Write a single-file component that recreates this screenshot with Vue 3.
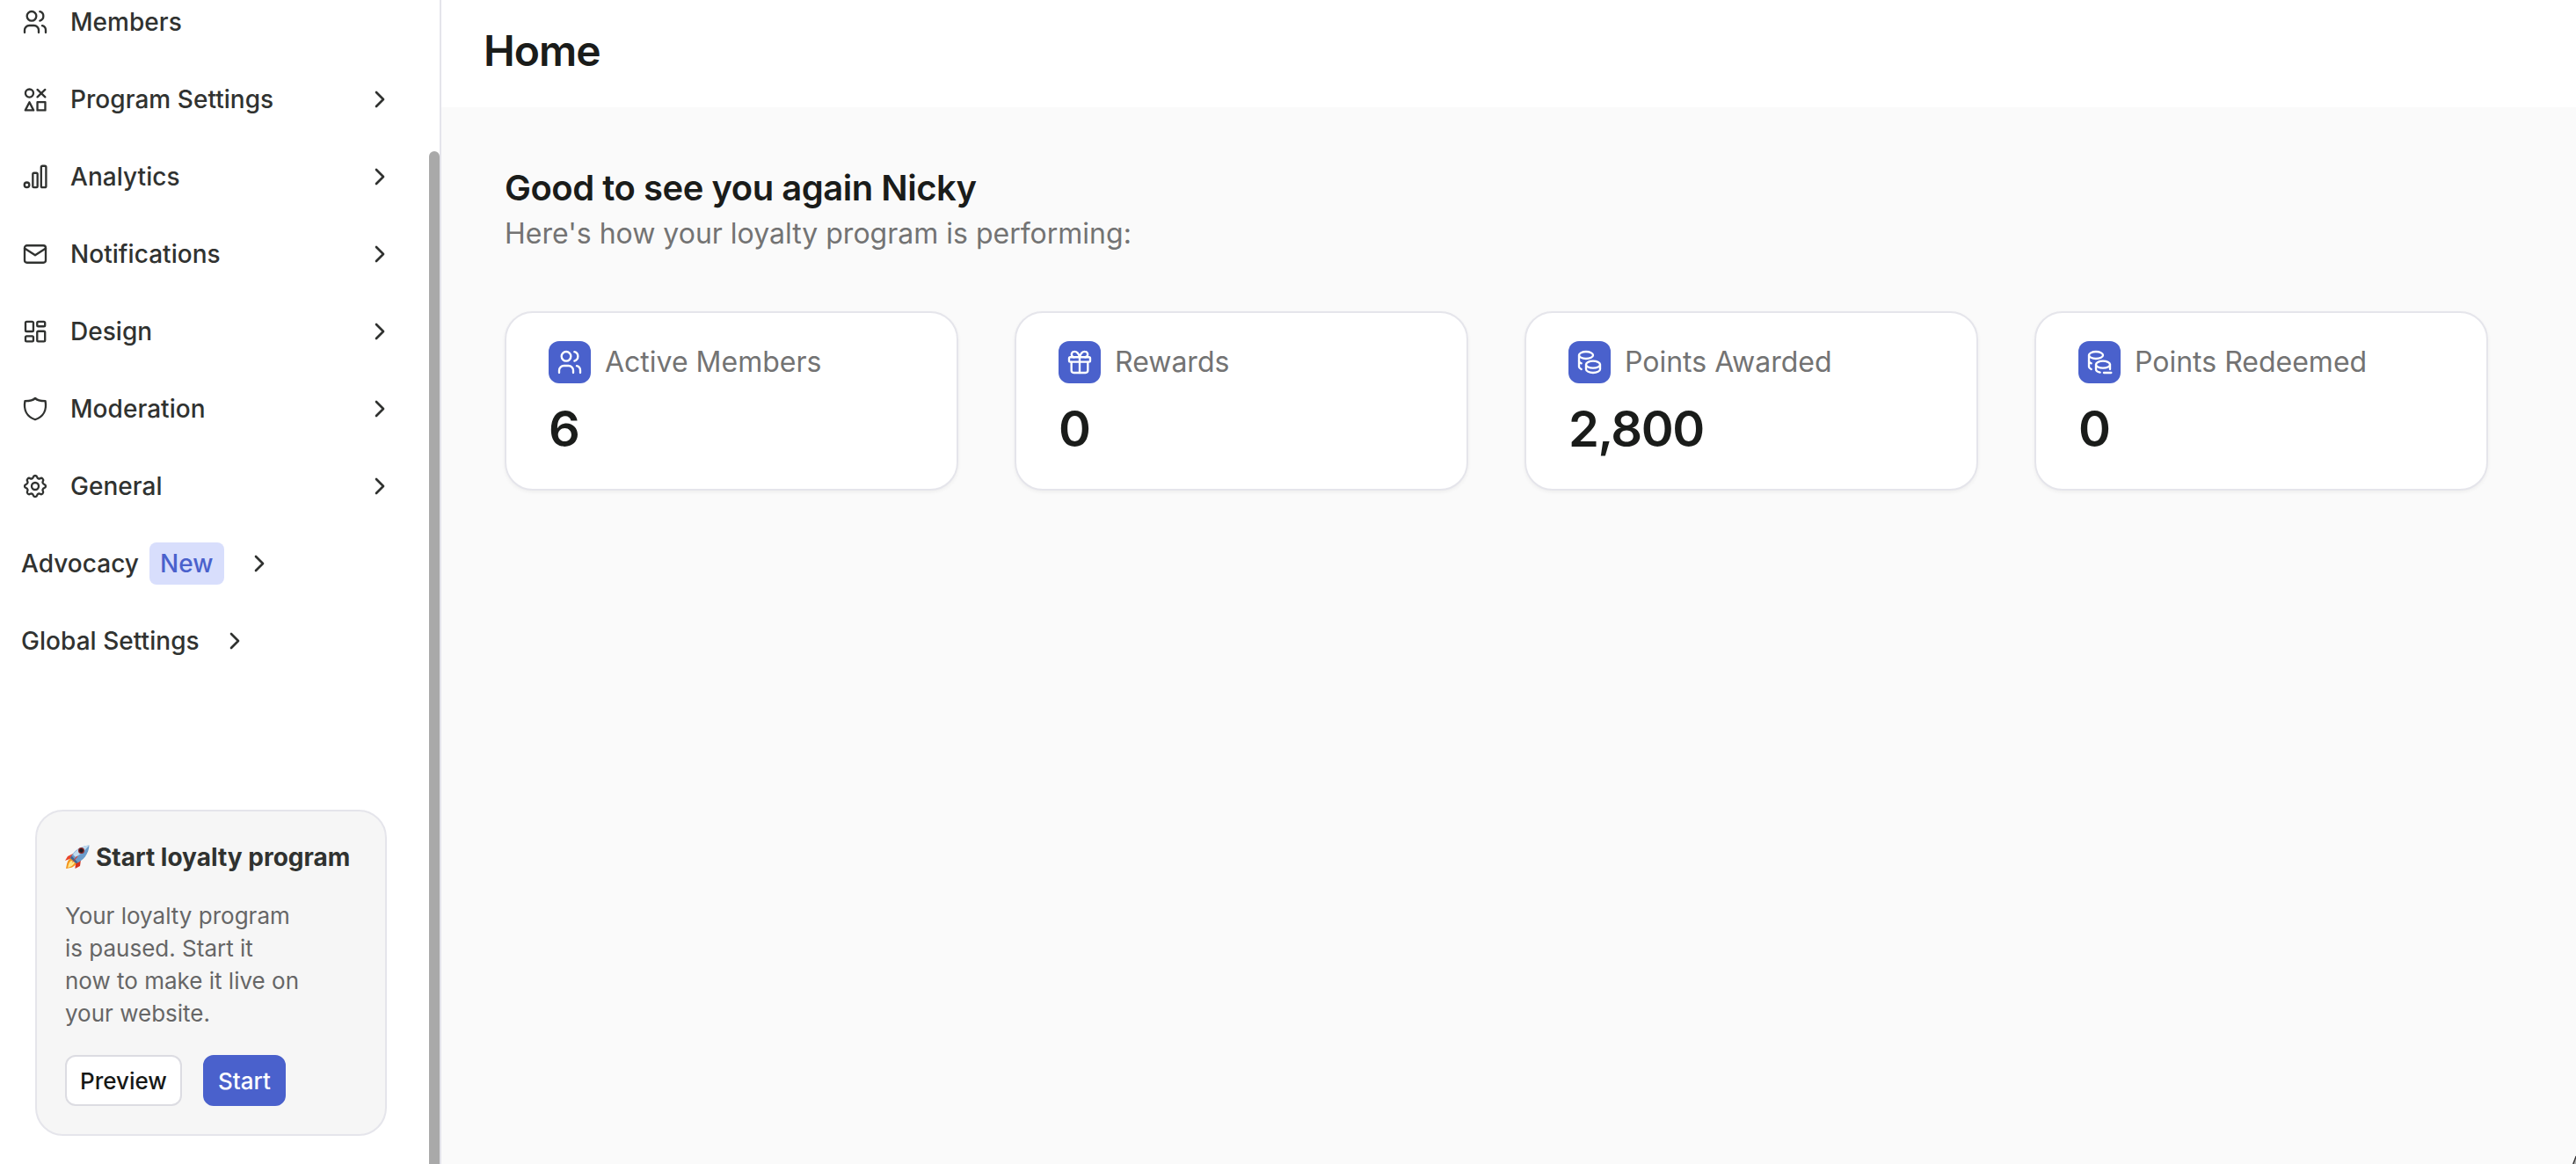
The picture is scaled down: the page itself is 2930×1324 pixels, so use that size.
<template>
  <div class="app-shell">
    <aside class="sidebar">
      <nav class="nav">
        <a v-for="item in navItems" :key="item.label" class="nav-item">
          <svg class="icon" viewBox="0 0 24 24">
            <path v-for="d in icons[item.icon]" :key="d" :d="d" />
          </svg>
          <span class="nav-label">{{ item.label }}</span>
          <svg v-if="item.expandable" class="icon chevron" viewBox="0 0 24 24">
            <path d="M9 6l6 6l-6 6" />
          </svg>
        </a>
        <a v-for="group in navGroups" :key="group.label" class="nav-group">
          <span>{{ group.label }}</span>
          <span v-if="group.badge" class="badge">{{ group.badge }}</span>
          <svg class="icon chevron" viewBox="0 0 24 24">
            <path d="M9 6l6 6l-6 6" />
          </svg>
        </a>
      </nav>

      <section class="promo">
        <h3 class="promo-title">
          <svg class="rocket" viewBox="0 0 28 28">
            <path d="M9 10L3 13L0 18L8 15Z" fill="#e8452b" />
            <path d="M18 17L17 24L11.500 27L12 20Z" fill="#d5321f" />
            <path d="M7 15C2 17 2 23 1 27C6 26 11 26 13 20Z" fill="#f5951f" />
            <path d="M7 18C4 20 4 23 3 26C6 25 9 24 11 20Z" fill="#ffe98a" />
            <path d="M27.500 0.500C19 1 10 6 6 15L12.500 21C21 18 27 10 27.500 0.500Z" fill="#6a9ccb" />
            <path d="M27.500 0.500C20 1 13 5 9 11L12 14C17 11 23 6 27.500 0.500Z" fill="#c3dcef" />
            <path d="M6 15L12.500 21L14.500 20L7.500 12.500Z" fill="#3f648f" />
            <path d="M15 12.500L9 19.500L7.500 21L12.500 13.500Z" fill="#dc3d2b" />
            <circle cx="18.500" cy="6.500" r="3.500" fill="#8d2b2b" />
            <circle cx="18.500" cy="6.500" r="2.200" fill="#1d1e26" />
          </svg>
          <span>Start loyalty program</span>
        </h3>
        <p class="promo-text">
          Your loyalty program<br />is paused. Start it<br />now to make it live on<br />your website.
        </p>
        <div class="promo-actions">
          <button class="btn">Preview</button>
          <button class="btn primary">Start</button>
        </div>
      </section>

      <div class="scroll-thumb"></div>
    </aside>

    <main class="main">
      <header class="page-header">
        <h1>Home</h1>
      </header>
      <div class="page-body">
        <h2>Good to see you again Nicky</h2>
        <p class="subtitle">Here's how your loyalty program is performing:</p>
        <div class="stats">
          <article v-for="stat in stats" :key="stat.label" class="stat-card">
            <div class="stat-head">
              <span class="stat-icon">
                <svg class="icon" viewBox="0 0 24 24">
                  <path v-for="d in icons[stat.icon]" :key="d" :d="d" />
                </svg>
              </span>
              <span class="stat-label">{{ stat.label }}</span>
            </div>
            <div class="stat-value">{{ stat.value }}</div>
          </article>
        </div>
      </div>
    </main>

    <svg class="corner" viewBox="0 0 4 10">
      <path d="M4 1L0 10H4Z" fill="#b5b5b5" />
      <path d="M4.200 1L0.800 10" stroke="#333" stroke-width="1.400" />
    </svg>
  </div>
</template>

<script setup>
const icons = {
  users: [
    'M5 7a4 4 0 1 0 8 0a4 4 0 1 0 -8 0',
    'M3 21v-2a4 4 0 0 1 4 -4h4a4 4 0 0 1 4 4v2',
    'M16 3.13a4 4 0 0 1 0 7.75',
    'M21 21v-2a4 4 0 0 0 -3 -3.85'
  ],
  shapes: [
    'M3.7 6.8a3.4 3.4 0 1 0 6.800 0a3.4 3.4 0 1 0 -6.800 0',
    'M13.900 3.700l6.600 6.300',
    'M20.500 3.700l-6.600 6.300',
    'M7.1 14.400l-3.500 6.900h7z',
    'M13.900 14.400h6.700v6.900h-6.700z'
  ],
  chart: [
    'M2.800 19a2.100 2.100 0 1 0 4.200 0a2.100 2.100 0 1 0 -4.200 0',
    'M11 8.800h2a1 1 0 0 1 1 1v10.300a1 1 0 0 1 -1 1h-2a1 1 0 0 1 -1 -1v-10.300a1 1 0 0 1 1 -1z',
    'M18.200 2.800h2a1.100 1.100 0 0 1 1.100 1.100v16.100a1.100 1.100 0 0 1 -1.100 1.100h-2a1.100 1.100 0 0 1 -1.100 -1.100v-16.100a1.100 1.100 0 0 1 1.100 -1.100z'
  ],
  mail: [
    'M5 4.700h14a2 2 0 0 1 2 2v10.600a2 2 0 0 1 -2 2h-14a2 2 0 0 1 -2 -2v-10.600a2 2 0 0 1 2 -2z',
    'M3 7.200l9 5.800l9 -5.800'
  ],
  layout: [
    'M4.750 3.700h4.700a1 1 0 0 1 1 1v6.300a1 1 0 0 1 -1 1h-4.700a1 1 0 0 1 -1 -1v-6.300a1 1 0 0 1 1 -1z',
    'M4.750 16h4.700a1 1 0 0 1 1 1v2.500a1 1 0 0 1 -1 1h-4.700a1 1 0 0 1 -1 -1v-2.500a1 1 0 0 1 1 -1z',
    'M14.700 3.700h4.700a1 1 0 0 1 1 1v2a1 1 0 0 1 -1 1h-4.700a1 1 0 0 1 -1 -1v-2a1 1 0 0 1 1 -1z',
    'M14.700 11.800h4.700a1 1 0 0 1 1 1v6.700a1 1 0 0 1 -1 1h-4.700a1 1 0 0 1 -1 -1v-6.700a1 1 0 0 1 1 -1z'
  ],
  shield: [
    'M12 2.900Q9.800 5.400 3.300 5.400C2 12.800 4.800 18.800 12 21.200C19.200 18.800 22 12.800 20.700 5.400Q14.200 5.400 12 2.900z'
  ],
  settings: [
    'M10.325 4.317c.426 -1.756 2.924 -1.756 3.350 0a1.724 1.724 0 0 0 2.573 1.066c1.543 -.94 3.310 .826 2.370 2.370a1.724 1.724 0 0 0 1.065 2.572c1.756 .426 1.756 2.924 0 3.350a1.724 1.724 0 0 0 -1.066 2.573c.94 1.543 -.826 3.310 -2.370 2.370a1.724 1.724 0 0 0 -2.572 1.065c-.426 1.756 -2.924 1.756 -3.350 0a1.724 1.724 0 0 0 -2.573 -1.066c-1.543 .94 -3.310 -.826 -2.370 -2.370a1.724 1.724 0 0 0 -1.065 -2.572c-1.756 -.426 -1.756 -2.924 0 -3.350a1.724 1.724 0 0 0 1.066 -2.573c-.94 -1.543 .826 -3.310 2.370 -2.370c1 .608 2.296 .07 2.572 -1.065z',
    'M9 12a3 3 0 1 0 6 0a3 3 0 1 0 -6 0'
  ],
  gift: [
    'M4 7.700h16a1 1 0 0 1 1 1v2a1 1 0 0 1 -1 1h-16a1 1 0 0 1 -1 -1v-2a1 1 0 0 1 1 -1z',
    'M12 7.700v13.300',
    'M19 12v7a2 2 0 0 1 -2 2h-10a2 2 0 0 1 -2 -2v-7',
    'M7.500 7.700a2.400 2.400 0 0 1 0 -4.800a4.800 8 0 0 1 4.500 4.800a4.800 8 0 0 1 4.500 -4.800a2.400 2.400 0 0 1 0 4.800'
  ],
  coins: [
    'M9 14c0 1.657 2.686 3 6 3s6 -1.343 6 -3s-2.686 -3 -6 -3s-6 1.343 -6 3z',
    'M9 14v4c0 1.656 2.686 3 6 3s6 -1.344 6 -3v-4',
    'M3 6c0 1.657 2.686 3 6 3s6 -1.343 6 -3s-2.686 -3 -6 -3s-6 1.343 -6 3z',
    'M3 6v10c0 .888 .772 1.450 2 2',
    'M3 11c0 .888 .772 1.450 2 2'
  ],
  coinsMinus: [
    'M9 14c0 1.657 2.686 3 6 3s6 -1.343 6 -3s-2.686 -3 -6 -3s-6 1.343 -6 3z',
    'M9 14v4c0 1.300 1.400 2.300 3.500 2.700',
    'M21 14v4',
    'M15.700 21h6.300',
    'M3 6c0 1.657 2.686 3 6 3s6 -1.343 6 -3s-2.686 -3 -6 -3s-6 1.343 -6 3z',
    'M3 6v10c0 .888 .772 1.450 2 2',
    'M3 11c0 .888 .772 1.450 2 2'
  ]
}

const navItems = [
  { label: 'Members', icon: 'users', expandable: false },
  { label: 'Program Settings', icon: 'shapes', expandable: true },
  { label: 'Analytics', icon: 'chart', expandable: true },
  { label: 'Notifications', icon: 'mail', expandable: true },
  { label: 'Design', icon: 'layout', expandable: true },
  { label: 'Moderation', icon: 'shield', expandable: true },
  { label: 'General', icon: 'settings', expandable: true }
]

const navGroups = [
  { label: 'Advocacy', badge: 'New' },
  { label: 'Global Settings' }
]

const stats = [
  { label: 'Active Members', icon: 'users', value: '6' },
  { label: 'Rewards', icon: 'gift', value: '0' },
  { label: 'Points Awarded', icon: 'coins', value: '2,800' },
  { label: 'Points Redeemed', icon: 'coinsMinus', value: '0' }
]
</script>

<style>
body {
  margin: 0;
  overflow: hidden;
}
</style>

<style scoped>
.app-shell {
  position: relative;
  display: flex;
  height: 100vh;
  overflow: hidden;
  background: #fafafa;
  color: #1a1c1a;
  font-family: Inter, "Liberation Sans", sans-serif;
}

h1,
h2,
h3,
p {
  margin: 0;
}

.sidebar {
  position: relative;
  box-sizing: border-box;
  flex: none;
  display: flex;
  flex-direction: column;
  justify-content: space-between;
  width: 502px;
  padding-bottom: 32px;
  border-right: 2px solid #e4e4eb;
  background: #fff;
  color: #303230;
}

.nav {
  margin-top: -19px;
  font-size: 28px;
  font-weight: 500;
  letter-spacing: 0.04px;
}

.nav-item,
.nav-group {
  display: flex;
  align-items: center;
  height: 88px;
  padding: 0 52px 0 24px;
  white-space: nowrap;
}

.nav-label {
  flex: 1;
  margin-left: 24px;
}

.icon {
  flex: none;
  display: block;
  width: 32px;
  height: 32px;
  fill: none;
  stroke: currentColor;
  stroke-width: 1.75;
  stroke-linecap: round;
  stroke-linejoin: round;
}

.chevron {
  stroke-width: 2;
}

.nav-group .chevron {
  margin-left: 24px;
}

.badge {
  margin-left: 12px;
  padding: 0 12px;
  border-radius: 8px;
  background: #d8defc;
  color: #4a61cc;
  line-height: 48px;
}

.promo {
  box-sizing: border-box;
  width: 400px;
  height: 371px;
  margin-left: 40px;
  padding: 31px 32px 32px;
  border: 2px solid #e5e5eb;
  border-radius: 32px;
  background: #f6f6f6;
}

.promo-title {
  display: flex;
  align-items: center;
  gap: 7px;
  height: 42px;
  font-size: 28px;
  font-weight: 700;
  white-space: nowrap;
}

.rocket {
  width: 28px;
  height: 28px;
}

.promo-text {
  margin-top: 27px;
  color: #666;
  font-size: 26px;
  line-height: 37px;
  white-space: nowrap;
}

.promo-actions {
  display: flex;
  gap: 24px;
  margin-top: 29px;
}

.btn {
  box-sizing: border-box;
  height: 58px;
  padding: 0 15px;
  border: 2px solid #dcdce2;
  border-radius: 12px;
  background: #fff;
  color: #161816;
  font: inherit;
  font-size: 26px;
  font-weight: 500;
}

.btn.primary {
  border-color: #4a61cc;
  background: #4a61cc;
  color: #fff;
}

.scroll-thumb {
  position: absolute;
  top: 172px;
  right: 0;
  bottom: -12px;
  width: 12px;
  border-radius: 6px;
  background: #a9a9a9;
}

.main {
  flex: 1;
  min-width: 0;
}

.page-header {
  box-sizing: border-box;
  height: 122px;
  padding: 28px 48px;
  background: #fff;
}

h1 {
  font-size: 48px;
  font-weight: 600;
  line-height: 60px;
  letter-spacing: -0.02em;
}

.page-body {
  padding: 66px 100px 0 72px;
}

h2 {
  font-size: 40px;
  font-weight: 600;
  line-height: 52px;
  letter-spacing: -0.012em;
}

.subtitle {
  color: #737373;
  font-size: 32px;
  line-height: 52px;
}

.stats {
  display: grid;
  grid-template-columns: repeat(4, 1fr);
  gap: 64px;
  margin-top: 62px;
}

.stat-card {
  box-sizing: border-box;
  height: 204px;
  padding: 32px 48px;
  border: 2px solid #e5e5eb;
  border-radius: 32px;
  background: #fff;
  box-shadow: 0 2px 4px rgba(0, 0, 0, 0.05);
}

.stat-head {
  display: flex;
  align-items: center;
  gap: 16px;
}

.stat-icon {
  display: flex;
  align-items: center;
  justify-content: center;
  width: 48px;
  height: 48px;
  border-radius: 12px;
  background: #4a61cc;
  color: #fff;
}

.stat-label {
  padding-bottom: 2px;
  color: #737373;
  font-size: 32px;
}

.stat-value {
  margin-top: 16px;
  font-size: 56px;
  font-weight: 600;
  line-height: 72px;
  letter-spacing: -0.026em;
}

.corner {
  position: absolute;
  right: 0;
  bottom: 0;
  width: 4px;
  height: 10px;
}
</style>
